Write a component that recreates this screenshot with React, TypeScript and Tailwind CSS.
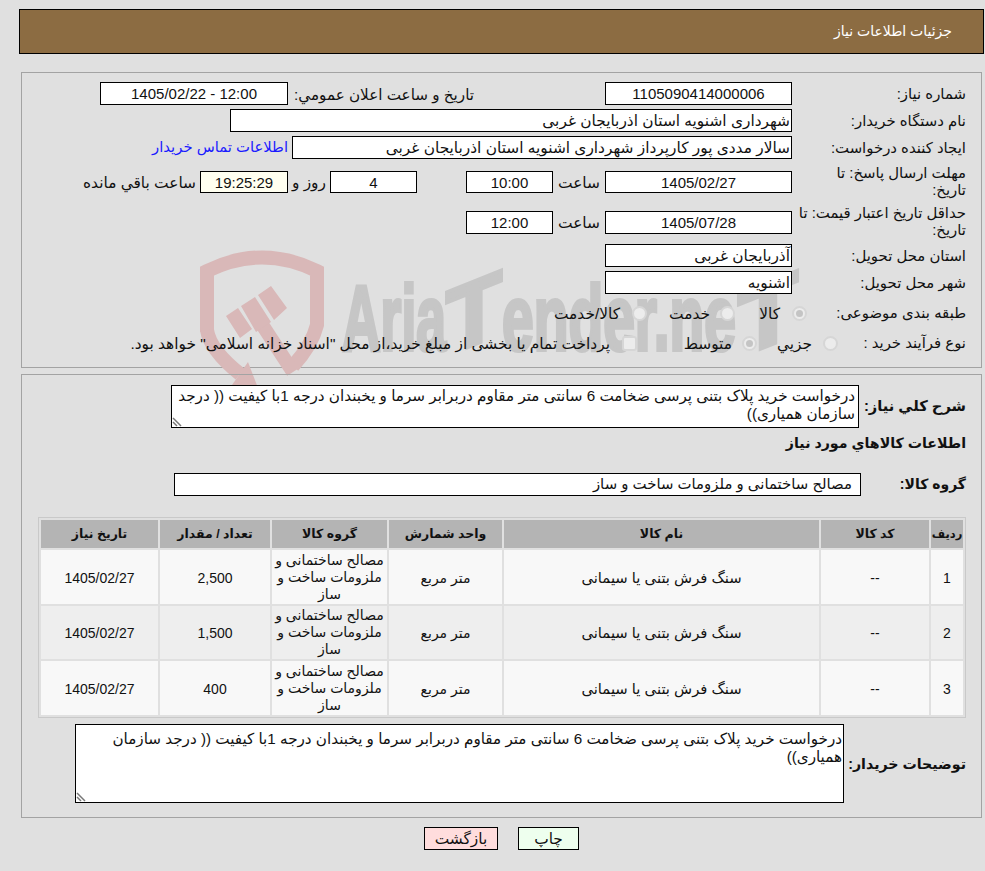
const rows = [
  { id: '1', qty: '2,500' },
  { id: '2', qty: '1,500' },
  { id: '3', qty: '400' },
];

const box = 'h-[23px] border border-black bg-white flex items-center justify-center shrink-0 text-[15px]';
const boxText = 'h-[23px] border border-black bg-white flex items-center px-[1px] shrink-0';
const label = 'w-[174px] shrink-0 leading-[17px] text-[14.9px] whitespace-nowrap pt-[2px]';

function Watermark() {
  const logoFont = "'Liberation Sans', sans-serif";
  return (
    <svg className="absolute left-0 top-0 pointer-events-none [direction:ltr]" width="985" height="440" viewBox="0 0 985 440">
      {/* shield */}
      <path d="M207 332 L207 271 Q262 244 317 271 L317 325 Q312 345 293 366" fill="none" stroke="#d9b8b8" strokeWidth="14" />
      <path d="M207 330 Q210 350 240 374" fill="none" stroke="#d9b8b8" strokeWidth="14" />
      <path d="M263 326 L293 372" fill="none" stroke="#d9b8b8" strokeWidth="14" />
      <path d="M248 362 L258 388 L232 385 Z" fill="#d9b8b8" />
      {/* gavel */}
      <path d="M226 316 L238 308 L252 329 L240 338 Z M241 306 L255 297 L271 322 L256 332 Z M258 295 L271 286 L287 308 L274 320 Z" fill="#d9b8b8" />
      {/* wordmark */}
      <g fontFamily={logoFont} fontWeight="700" fontSize="92" fill="#c6c6c6" stroke="#c6c6c6" strokeWidth="4">
        <text x="342" y="350" textLength="104" lengthAdjust="spacingAndGlyphs">Aria</text>
        <text transform="translate(446 356) skewY(-22)" textLength="56" lengthAdjust="spacingAndGlyphs">T</text>
        <text x="502" y="350" textLength="234" lengthAdjust="spacingAndGlyphs">ender.ne</text>
        <text transform="translate(738 358) skewY(-22)" textLength="60" lengthAdjust="spacingAndGlyphs">T</text>
      </g>
    </svg>
  );
}

function Radio({ checked }: { checked?: boolean }) {
  return (
    <span className="w-[15px] h-[15px] rounded-full border-2 border-[#d6d6d6] bg-[#ececec] flex items-center justify-center shrink-0">
      {checked && <span className="w-[7px] h-[7px] rounded-full bg-[#c4c4c4]" />}
    </span>
  );
}

function ResizeGrip() {
  return (
    <svg className="absolute left-0 bottom-0" width="11" height="11" viewBox="0 0 11 11">
      <path d="M1 2 L9 10 M1 6 L5 10" stroke="#777" strokeWidth="1.5" />
    </svg>
  );
}

export default function App() {
  return (
    <div
      dir="rtl"
      className="relative w-[985px] h-[871px] overflow-hidden bg-[#e0e0e0] text-[15.4px] leading-[17px] text-[#111]"
      style={{ fontFamily: "'Liberation Sans', 'DejaVu Sans', sans-serif" }}
    >
      <div className="pt-[9px] pl-[19px] pr-[1px]">
        <div className="h-[45px] border border-black bg-[#8c6c42] text-white text-[14px] flex items-center pr-[31px]">جزئیات اطلاعات نیاز</div>
      </div>

      {/* main form */}
      <div className="relative mt-[18px] mr-[3px] ml-[21px] h-[296px] border border-[#a3a3a3] pt-[9px] pr-[15px]">
        <div className="absolute left-[-22px] top-[-73px]">
          <Watermark />
        </div>
        <div className="relative flex flex-col">
          <div className="flex items-center h-[23px]">
            <div className={label}>شماره نیاز:</div>
            <div className={`${box} w-[187px]`}>1105090414000006</div>
            <div className="w-[317px] pr-[131px] pt-[2px] shrink-0 whitespace-nowrap text-[15.2px]">تاریخ و ساعت اعلان عمومي:</div>
            <div className={`${box} w-[188px]`}>12:00 - 1405/02/22</div>
          </div>
          <div className="flex items-center h-[23px] mt-[4px]">
            <div className={label}>نام دستگاه خریدار:</div>
            <div className={`${boxText} w-[562px]`}>شهرداری اشنویه استان اذربایجان غربی</div>
          </div>
          <div className="flex items-center h-[23px] mt-[4px]">
            <div className={label}>ایجاد کننده درخواست:</div>
            <div className={`${boxText} w-[500px]`}>سالار مددی پور کارپرداز شهرداری اشنویه استان اذربایجان غربی</div>
            <a className="mr-[4px] text-[#1a1aff] whitespace-nowrap text-[14.8px]">اطلاعات تماس خریدار</a>
          </div>
          <div className="flex items-center h-[34px] mt-[6px]">
            <div className={`${label} !pt-0`}>مهلت ارسال پاسخ: تا<br />تاریخ:</div>
            <div className={`${box} w-[187px] !h-[22px]`}>1405/02/27</div>
            <div className="w-[52px] text-center shrink-0">ساعت</div>
            <div className={`${box} w-[87px] !h-[22px]`}>10:00</div>
            <div className="w-[49px] shrink-0" />
            <div className={`${box} w-[87px] !h-[22px]`}>4</div>
            <div className="w-[42px] text-center shrink-0">روز و</div>
            <div className={`${box} w-[88px] !h-[22px] !bg-[#fffff0]`}>19:25:29</div>
            <div className="mr-[4px] whitespace-nowrap">ساعت باقي مانده</div>
          </div>
          <div className="flex items-center h-[34px] mt-[6px]">
            <div className={`${label} !pt-0`}>حداقل تاریخ اعتبار قیمت: تا<br />تاریخ:</div>
            <div className={`${box} w-[187px]`}>1405/07/28</div>
            <div className="w-[52px] text-center shrink-0">ساعت</div>
            <div className={`${box} w-[87px]`}>12:00</div>
          </div>
          <div className="flex items-center h-[23px] mt-[5px]">
            <div className={label}>استان محل تحویل:</div>
            <div className={`${boxText} w-[187px]`}>آذربایجان غربی</div>
          </div>
          <div className="flex items-center h-[23px] mt-[4px]">
            <div className={label}>شهر محل تحویل:</div>
            <div className={`${boxText} w-[187px]`}>اشنویه</div>
          </div>
          <div className="flex items-center h-[23px] mt-[8px]">
            <div className={`${label} !w-[159px] !pt-0`}>طبقه بندی موضوعی:</div>
            <Radio checked />
            <span className="w-[45px] mr-[12px] shrink-0">کالا</span>
            <Radio />
            <span className="w-[63px] mr-[10px] shrink-0">خدمت</span>
            <Radio />
            <span className="mr-[12px] whitespace-nowrap">کالا/خدمت</span>
          </div>
          <div className="flex items-center h-[23px] mt-[7px]">
            <div className={`${label} !w-[128px] !pt-0`}>نوع فرآیند خرید :</div>
            <Radio />
            <span className="w-[55px] mr-[11px] shrink-0">جزیي</span>
            <Radio checked />
            <span className="w-[95px] mr-[10px] shrink-0">متوسط</span>
            <span className="w-[15px] h-[15px] rounded-[3px] border-2 border-[#d6d6d6] bg-[#ececec] shrink-0" />
            <span className="mr-[12px] whitespace-nowrap">پرداخت تمام یا بخشی از مبلغ خرید،از محل "اسناد خزانه اسلامی" خواهد بود.</span>
          </div>
        </div>
      </div>

      {/* description + table */}
      <div className="relative mt-[6px] mr-[3px] ml-[21px] h-[444px] border border-[#a3a3a3] pt-[10px] pr-[15px] pl-[16px]">
        <div className="flex items-center">
          <div className="w-[107px] shrink-0 font-bold whitespace-nowrap text-[14.7px]">شرح کلي نیاز:</div>
          <div className="relative w-[688px] h-[43px] border border-black bg-white px-[3px] pt-[1px] leading-[18px] text-[15.2px]">
            درخواست خرید پلاک بتنی پرسی ضخامت 6 سانتی متر مقاوم دربرابر سرما و یخبندان درجه 1با کیفیت (( درجد سازمان همیاری))
            <ResizeGrip />
          </div>
        </div>
        <div className="font-bold mt-[7px] text-[14.2px]">اطلاعات کالاهاي مورد نیاز</div>
        <div className="flex items-center mt-[21px]">
          <div className="w-[105px] shrink-0 font-bold text-[14px]">گروه کالا:</div>
          <div className="w-[687px] h-[23px] border border-black bg-white flex items-center pr-[8px] text-[14.9px]">مصالح ساختمانی و ملزومات ساخت و ساز</div>
        </div>

        <table className="mt-[21px] w-[928px] border-separate border-spacing-[2px] border border-[#c9c9c9] table-fixed text-center text-[14px]">
          <thead>
            <tr className="h-[28px] bg-[#b4b4b4] text-[12.5px]">
              <th className="w-[32px] font-bold p-0 text-[11.5px]">ردیف</th>
              <th className="w-[108px] font-bold p-0">کد کالا</th>
              <th className="w-[315px] font-bold p-0">نام کالا</th>
              <th className="w-[113px] font-bold p-0">واحد شمارش</th>
              <th className="w-[115px] font-bold p-0">گروه کالا</th>
              <th className="w-[110px] font-bold p-0">تعداد / مقدار</th>
              <th className="font-bold p-0">تاریخ نیاز</th>
            </tr>
          </thead>
          <tbody>
            {rows.map((row, i) => (
              <tr key={row.id} className={i === 1 ? 'h-[53px] bg-[#eeeeee]' : 'h-[54px] bg-[#f8f8f8]'}>
                <td className="p-0 pt-[2px]">{row.id}</td>
                <td className="p-0 pt-[2px]">--</td>
                <td className="p-0 pt-[2px] text-[14.8px]">سنگ فرش بتنی یا سیمانی</td>
                <td className="p-0 pt-[2px]">متر مربع</td>
                <td className="p-0">مصالح ساختمانی و ملزومات ساخت و ساز</td>
                <td className="p-0 pt-[2px]">{row.qty}</td>
                <td className="p-0 pt-[2px]">1405/02/27</td>
              </tr>
            ))}
          </tbody>
        </table>

        <div className="flex items-center mt-[6px]">
          <div className="w-[122px] shrink-0 font-bold whitespace-nowrap text-[14.2px] pt-[2px]">توضیحات خریدار:</div>
          <div className="relative w-[769px] h-[79px] border border-black bg-white pr-[1px] pl-[3px] pt-[5px] leading-[18px] text-[15.2px]">
            درخواست خرید پلاک بتنی پرسی ضخامت 6 سانتی متر مقاوم دربرابر سرما و یخبندان درجه 1با کیفیت (( درجد سازمان همیاری))
            <ResizeGrip />
          </div>
        </div>
      </div>

      <div className="flex justify-center gap-[20px] mt-[9px] pl-[18px]">
        <button className="w-[61px] h-[23px] border border-black bg-[#eeffee] leading-none">چاپ</button>
        <button className="w-[74px] h-[23px] border border-black bg-[#ffdddd] leading-none">بازگشت</button>
      </div>
    </div>
  );
}
